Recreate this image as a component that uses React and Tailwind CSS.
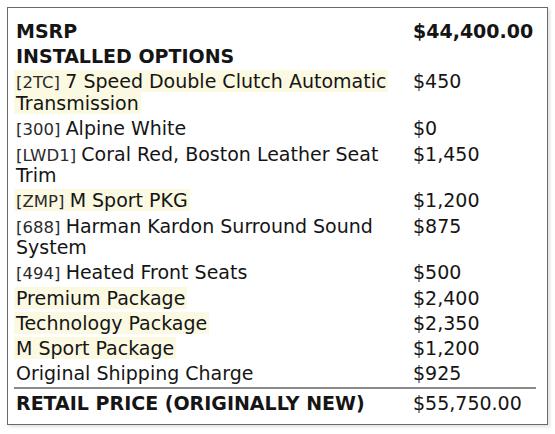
import React from "react";

const rows = [
  { code: "2TC", lines: ["7 Speed Double Clutch Automatic", "Transmission"], price: "$450", hl: true },
  { code: "300", lines: ["Alpine White"], price: "$0" },
  { code: "LWD1", lines: ["Coral Red, Boston Leather Seat", "Trim"], price: "$1,450" },
  { code: "ZMP", lines: ["M Sport PKG"], price: "$1,200", hl: true },
  { code: "688", lines: ["Harman Kardon Surround Sound", "System"], price: "$875" },
  { code: "494", lines: ["Heated Front Seats"], price: "$500" },
  { lines: ["Premium Package"], price: "$2,400", hl: true },
  { lines: ["Technology Package"], price: "$2,350", hl: true },
  { lines: ["M Sport Package"], price: "$1,200", hl: true },
  { lines: ["Original Shipping Charge"], price: "$925" },
];

function Desc({ r }) {
  const content = (
    <>
      {r.code && <span className="text-[16.5px] leading-[16px] text-[#2a2a2a]">[{r.code}] </span>}
      {r.lines.map((l, i) => (
        <React.Fragment key={i}>
          {i > 0 && <br />}
          {l}
        </React.Fragment>
      ))}
    </>
  );
  if (r.hl) {
    return (
      <span className="bg-[#fbf9e1] px-[2px] -mx-[2px] [box-decoration-break:clone]">{content}</span>
    );
  }
  return content;
}

export default function App() {
  return (
    <div
      className="bg-white w-[555px] h-[434px] pt-[7px] pl-[7px] text-[#151515]"
      style={{ fontFamily: '"DejaVu Sans", sans-serif' }}
    >
      <div className="w-[541px] h-[418px] border border-[#6a6a6a] bg-white shadow-[2px_2px_3px_rgba(0,0,0,0.12)] pt-[11px] px-[6px]">
        <table className="w-[522px] border-collapse text-[19px] leading-[21.5px]">
          <tbody>
            <tr>
              <td className="w-[397px] px-[2px] py-[1.9px] font-bold align-top">MSRP</td>
              <td className="px-[2px] py-[1.9px] font-bold align-top">$44,400.00</td>
            </tr>
            <tr>
              <td className="px-[2px] py-[1.9px] font-bold align-top">INSTALLED OPTIONS</td>
              <td className="px-[2px] py-[1.9px] align-top"></td>
            </tr>
            {rows.map((r, i) => (
              <tr key={i}>
                <td className="px-[2px] py-[1.9px] align-top whitespace-nowrap">
                  <Desc r={r} />
                </td>
                <td className="px-[2px] py-[1.9px] align-top">{r.price}</td>
              </tr>
            ))}
            <tr className="border-t-2 border-[#8a8a8a]">
              <td className="px-[2px] pt-[4px] pb-[1.9px] font-bold align-top">RETAIL PRICE (ORIGINALLY NEW)</td>
              <td className="px-[2px] pt-[4px] pb-[1.9px] align-top">$55,750.00</td>
            </tr>
          </tbody>
        </table>
      </div>
    </div>
  );
}
